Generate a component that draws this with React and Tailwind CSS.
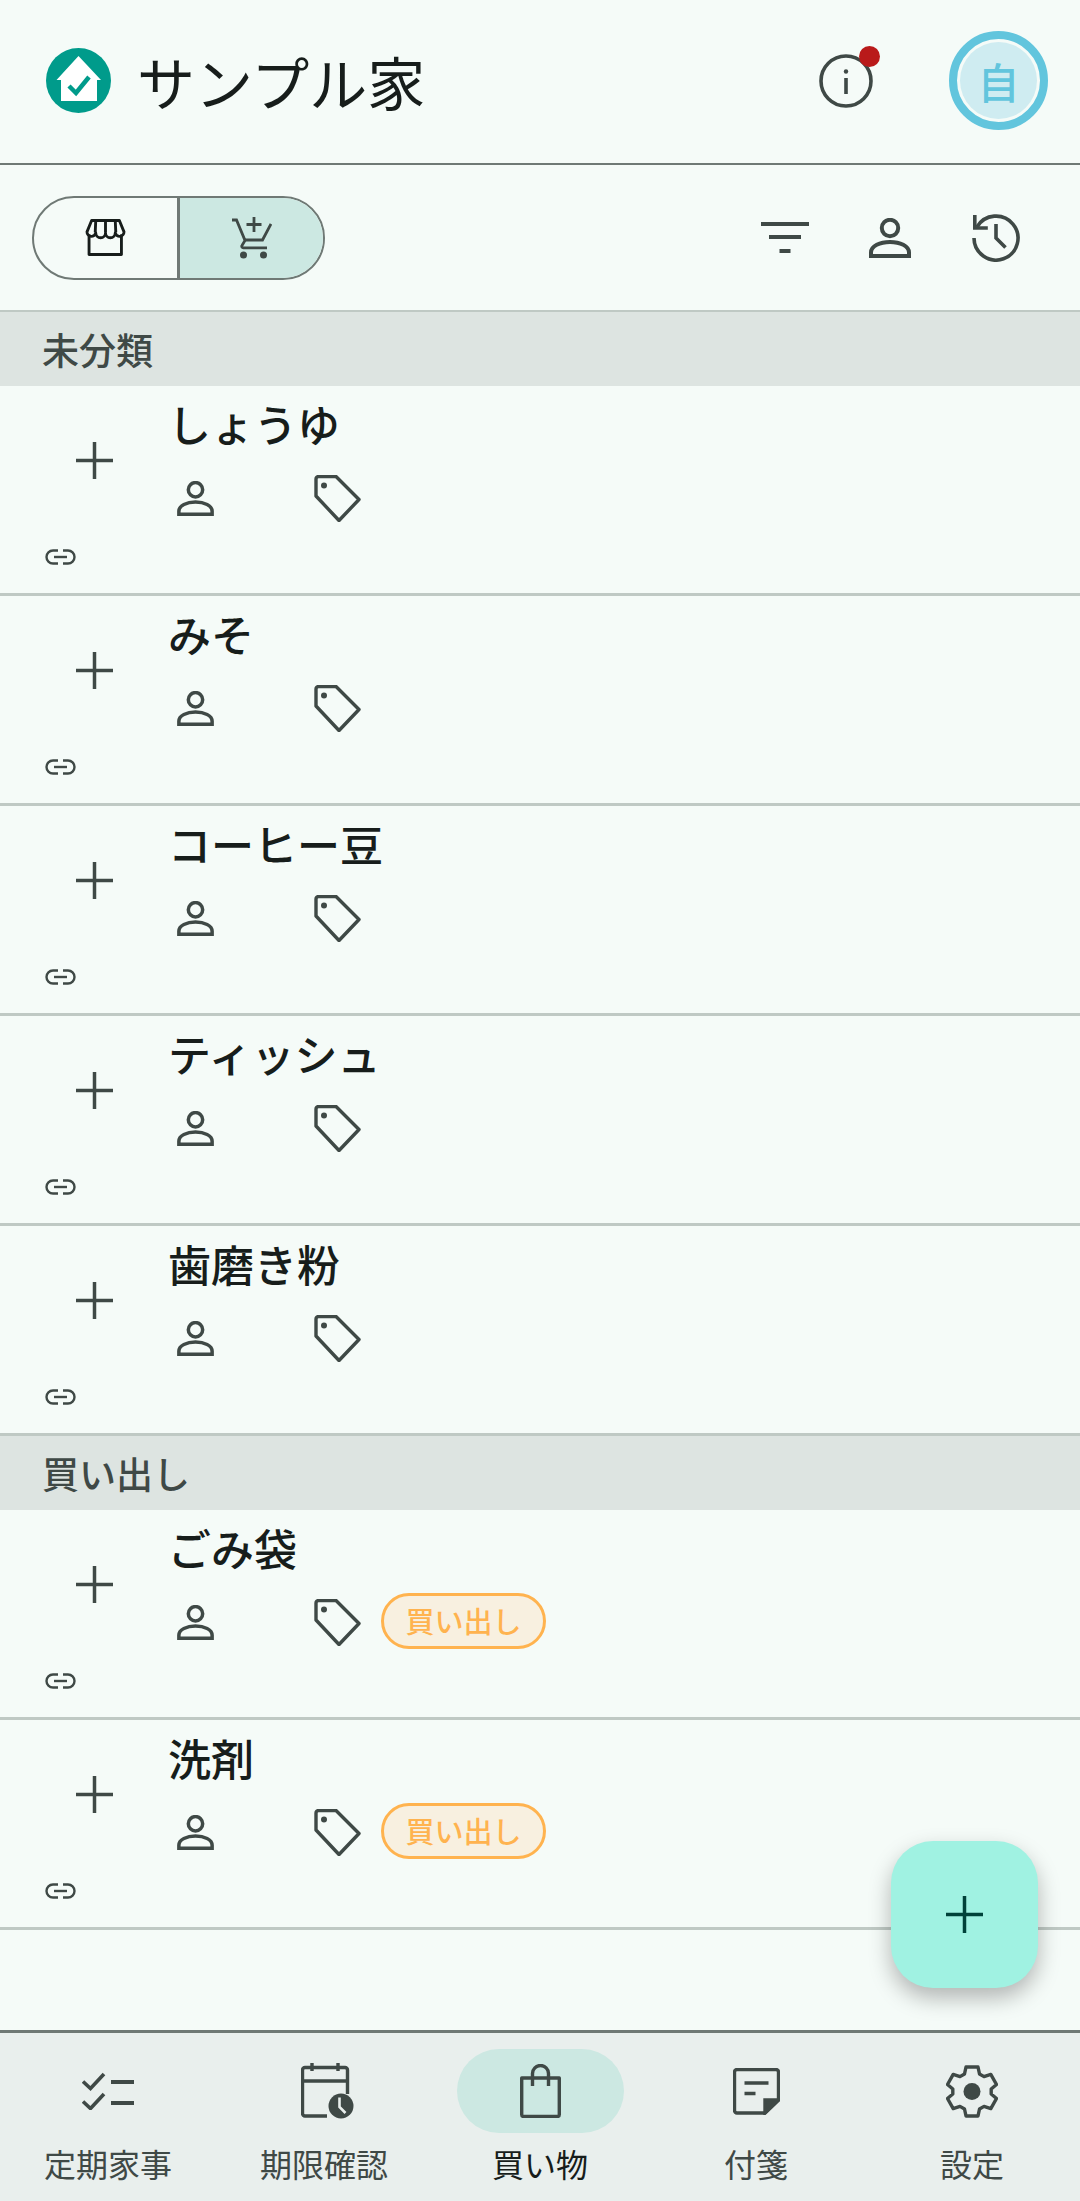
const cjk = { fontFamily: '"Noto Sans CJK JP", "Noto Sans", sans-serif' }

function IconPerson({ className }) {
  return (
    <svg className={className} viewBox="0 0 42 40" fill="none" stroke="currentColor" strokeWidth="4">
      <circle cx="21" cy="10" r="8.200" />
      <path d="M2 38v-3.500C2 28 11 24 21 24s19 4 19 10.500V38Z" />
    </svg>
  )
}

function IconTag() {
  return (
    <svg className="w-[47px] h-[47px] shrink-0" viewBox="0 0 47 47" fill="none" stroke="#3f4946" strokeWidth="3.400" strokeLinejoin="round">
      <path d="M2 4a2.500 2.500 0 0 1 2.500-2.500H22L45 24.500 25 45.500 2 21Z" />
      <circle cx="10" cy="10.500" r="3" fill="#3f4946" stroke="none" />
    </svg>
  )
}

function IconPlus({ className }) {
  return (
    <svg className={className} viewBox="0 0 36 36" fill="currentColor">
      <rect x="16.300" y="0" width="3.400" height="36" />
      <rect x="0" y="16.300" width="36" height="3.400" />
    </svg>
  )
}

function IconLink() {
  return (
    <svg className="w-[31px] h-[16px]" viewBox="0 0 31 16" fill="none" stroke="#3f4946" strokeWidth="2.400">
      <path d="M13 1.500H8a6.500 6.500 0 0 0 0 13h5" />
      <path d="M18 1.500h5a6.500 6.500 0 0 1 0 13h-5" />
      <path d="M9 8h13" />
    </svg>
  )
}

function Logo() {
  return (
    <svg className="w-[65px] h-[65px]" viewBox="0 0 65 65">
      <circle cx="32.500" cy="32.500" r="32.500" fill="#009b8b" />
      <path d="M32.500 8 55 32h-4v21H15V32h-4.500Z" fill="#fff" />
      <path d="M23 38l7 7 13-16" fill="none" stroke="#009b8b" strokeWidth="4.500" />
    </svg>
  )
}

function IconStore() {
  return (
    <svg className="w-[41px] h-[37px]" viewBox="0 0 39 36" fill="none" stroke="#171d1b" strokeWidth="2.800" strokeLinejoin="round">
      <path d="M3.500 15v19.500h31.500V15" />
      <path d="M6 1.500h27l4.500 11a4.300 4.300 0 0 1-8.500 1 4.700 4.700 0 0 1-9.500 0 4.700 4.700 0 0 1-9.500 0 4.300 4.300 0 0 1-8.500-1Z" />
      <path d="M10 1.500 9.500 13M19.500 1.500V13M29 1.500 29.500 13" />
    </svg>
  )
}

function IconCartAdd() {
  return (
    <svg className="w-[40px] h-[42px]" viewBox="0 0 40 42" fill="none" stroke="#3f4946" strokeWidth="2.800">
      <path d="M0 3h4.500l8.500 20.500-3 5a1.500 1.500 0 0 0 1.300 2.300H35" />
      <path d="M13 23h17.500L39 7" />
      <path d="M22 0v15M14.500 7.500h15" />
      <circle cx="11.500" cy="38" r="3.500" fill="#3f4946" stroke="none" />
      <circle cx="31.500" cy="38" r="3.500" fill="#3f4946" stroke="none" />
    </svg>
  )
}

function IconFilter() {
  return (
    <svg className="w-[48px] h-[31px]" viewBox="0 0 48 31" fill="#3f4946">
      <rect x="0" y="0" width="48" height="4" />
      <rect x="8" y="13" width="32" height="4" />
      <rect x="18.500" y="27" width="11" height="4" />
    </svg>
  )
}

function IconHistory() {
  return (
    <svg className="w-[48px] h-[48px]" viewBox="0 0 48 48" fill="none" stroke="#3f4946" strokeWidth="3.600">
      <path d="M5 13A22 22 0 1 1 2 24" />
      <path d="M2.800 1v13h13" />
      <path d="M24 10v14l9.500 9.500" />
    </svg>
  )
}

function IconInfo() {
  return (
    <svg className="w-[54px] h-[54px]" viewBox="0 0 54 54" fill="none" stroke="#3f4946" strokeWidth="3.600">
      <circle cx="27" cy="27" r="25" />
      <rect x="25.200" y="24" width="3.600" height="16" fill="#3f4946" stroke="none" />
      <circle cx="27" cy="17.500" r="2.200" fill="#3f4946" stroke="none" />
    </svg>
  )
}

function IconChecklist() {
  return (
    <svg className="w-[52px] h-[38px]" viewBox="0 0 52 38" fill="none" stroke="#3f4946" strokeWidth="3.600">
      <path d="M1 9.500l7.500 7L22 2" />
      <path d="M1 29.500l7.500 7L22 22" />
      <path d="M29 10h23M29 31h23" strokeWidth="4" />
    </svg>
  )
}

function IconCalendarClock() {
  return (
    <svg className="w-[53px] h-[56px] ml-[6px]" viewBox="0 0 53 56" fill="none" stroke="#3f4946" strokeWidth="3.400">
      <path d="M26 53H4a2.500 2.500 0 0 1-2.500-2.500V7A2.500 2.500 0 0 1 4 4.500h40A2.500 2.500 0 0 1 46.500 7v24" />
      <path d="M2 18h44M11 0v8M37 0v8" />
      <circle cx="40" cy="43" r="12.500" fill="#3f4946" stroke="none" />
      <path d="M38.500 34.500V44l6 6" stroke="#e9efed" strokeWidth="2.600" />
    </svg>
  )
}

function IconBag() {
  return (
    <svg className="w-[41px] h-[54px]" viewBox="0 0 41 54" fill="none" stroke="#3f4946" strokeWidth="3.400">
      <path d="M1.700 14h37.600v36.500a2 2 0 0 1-2 2H3.700a2 2 0 0 1-2-2Z" strokeLinejoin="round" />
      <path d="M12.500 22V9.500a8 8 0 0 1 16 0V22" />
    </svg>
  )
}

function IconNote() {
  return (
    <svg className="w-[47px] h-[47px]" viewBox="0 0 47 47" fill="none" stroke="#3f4946" strokeWidth="3.400">
      <path d="M32 45H4a2.500 2.500 0 0 1-2.500-2.500V4A2.500 2.500 0 0 1 4 1.500h39A2.500 2.500 0 0 1 45.500 4v28Z" strokeLinejoin="round" />
      <path d="M32 45V32h13.500Z" fill="#3f4946" />
      <path d="M11.500 15h24M11.500 25.500h11" />
    </svg>
  )
}

function IconGear() {
  return (
    <svg className="w-[52px] h-[53px]" viewBox="0 0 52 53" fill="none" stroke="#3f4946" strokeWidth="3.400" strokeLinejoin="round">
      <path d="M20 2h12l1.500 7 4.500 2.600 6.800-2.200L50.500 19.500 45.200 24v5l5.300 4.500-5.700 10.100-6.800-2.200-4.500 2.600L32 51H20l-1.500-7-4.500-2.600-6.800 2.200L1.500 33.500 6.800 29v-5L1.500 19.500 7.200 9.400l6.800 2.200L18.500 9Z" />
      <circle cx="26" cy="26.500" r="8.500" fill="#3f4946" stroke="none" />
    </svg>
  )
}

function Fila({ nombre, etiqueta }) {
  return (
    <div className="flex h-[210px] border-b-[3px] border-[#bfc9c4]">
      <div className="w-[168px] shrink-0 flex flex-col">
        <div className="pl-[76px] pt-[56px] text-[#3f4946]">
          <IconPlus className="w-[37px] h-[37px]" />
        </div>
        <div className="pl-[45px] mt-[70px] flex">
          <IconLink />
        </div>
      </div>
      <div className="flex flex-col">
        <div className="h-[75px] flex items-center text-[43px] font-medium text-[#171d1b]" style={cjk}>
          {nombre}
        </div>
        <div className="flex items-center h-[74px]">
          <div className="w-[146px] pl-[9px] text-[#3f4946]">
            <IconPerson className="w-[37px] h-[35px]" />
          </div>
          <IconTag />
          {etiqueta && (
            <div className="ml-[20px] mt-[-2px] w-[165px] h-[56px] flex items-center justify-center rounded-full border-[3px] border-[#ffb34f] bg-[#f8f0e0] text-[29px] font-medium text-[#ffb34f]" style={cjk}>
              {etiqueta}
            </div>
          )}
        </div>
      </div>
    </div>
  )
}

function Seccion({ titulo }) {
  return (
    <div className="h-[74px] bg-[#dde4e1] flex items-center pl-[42px] text-[37px] leading-none font-medium text-[#3f4946]" style={cjk}>
      {titulo}
    </div>
  )
}

const navItems = [
  { label: '定期家事', icon: <IconChecklist /> },
  { label: '期限確認', icon: <IconCalendarClock /> },
  { label: '買い物', icon: <IconBag />, activo: true },
  { label: '付箋', icon: <IconNote /> },
  { label: '設定', icon: <IconGear /> },
]

export default function App() {
  return (
    <div className="relative w-[1080px] h-[2201px] overflow-hidden flex flex-col bg-[#f5fbf8]" style={cjk}>
      <header className="h-[165px] shrink-0 border-b-2 border-[#6f7975] flex items-center pb-[2px]">
        <div className="ml-[46px]">
          <Logo />
        </div>
        <h1 className="ml-[26px] text-[58px] leading-none font-normal text-[#171d1b]" style={cjk}>サンプル家</h1>
        <div className="relative ml-auto mr-[76px]">
          <IconInfo />
          <span className="absolute right-[-7px] top-[-8px] w-[21px] h-[21px] rounded-full bg-[#b91a1a]" />
        </div>
        <div className="mr-[32px] w-[99px] h-[99px] rounded-full border-[8px] border-[#62c5dd] bg-[#f5fbf8] p-[3px]">
          <div className="w-full h-full rounded-full bg-[#cfecf1] flex items-center justify-center text-[42px] font-medium text-[#62c5dd]">自</div>
        </div>
      </header>

      <div className="h-[147px] shrink-0 border-b-[2px] border-[#bfc9c4] flex items-center pr-[60px]">
        <div className="ml-[32px] flex w-[293px] h-[84px] rounded-full border-2 border-[#6f7975] overflow-hidden">
          <div className="w-[146px] flex items-center justify-center border-r-[3px] border-[#6f7975]">
            <IconStore />
          </div>
          <div className="flex-1 bg-[#cce8e2] flex items-center justify-center">
            <IconCartAdd />
          </div>
        </div>
        <div className="ml-auto flex items-center">
          <IconFilter />
          <div className="ml-[60px] text-[#3f4946]">
            <IconPerson className="w-[42px] h-[40px]" />
          </div>
          <div className="ml-[61px]">
            <IconHistory />
          </div>
        </div>
      </div>

      <main className="flex-1">
        <Seccion titulo="未分類" />
        <Fila nombre="しょうゆ" />
        <Fila nombre="みそ" />
        <Fila nombre="コーヒー豆" />
        <Fila nombre="ティッシュ" />
        <Fila nombre="歯磨き粉" />
        <Seccion titulo="買い出し" />
        <Fila nombre="ごみ袋" etiqueta="買い出し" />
        <Fila nombre="洗剤" etiqueta="買い出し" />
      </main>

      <nav className="h-[171px] shrink-0 border-t-[3px] border-[#6f7975] bg-[#e9efed] grid grid-cols-5">
        {navItems.map((item) => (
          <div key={item.label} className="flex flex-col items-center pt-[16px]">
            <div className={`w-[167px] h-[84px] rounded-full flex items-center justify-center ${item.activo ? 'bg-[#cce8e2]' : ''}`}>
              {item.icon}
            </div>
            <span className={`mt-[10px] text-[32px] leading-[40px] ${item.activo ? 'text-[#171d1b]' : 'text-[#3f4946]'}`}>
              {item.label}
            </span>
          </div>
        ))}
      </nav>

      <button className="absolute left-[891px] top-[1841px] w-[147px] h-[147px] rounded-[42px] bg-[#a0f2e2] flex items-center justify-center text-[#00423a] shadow-[0_10px_22px_rgba(0,0,0,0.28)]">
        <IconPlus className="w-[37px] h-[37px]" />
      </button>
    </div>
  )
}
